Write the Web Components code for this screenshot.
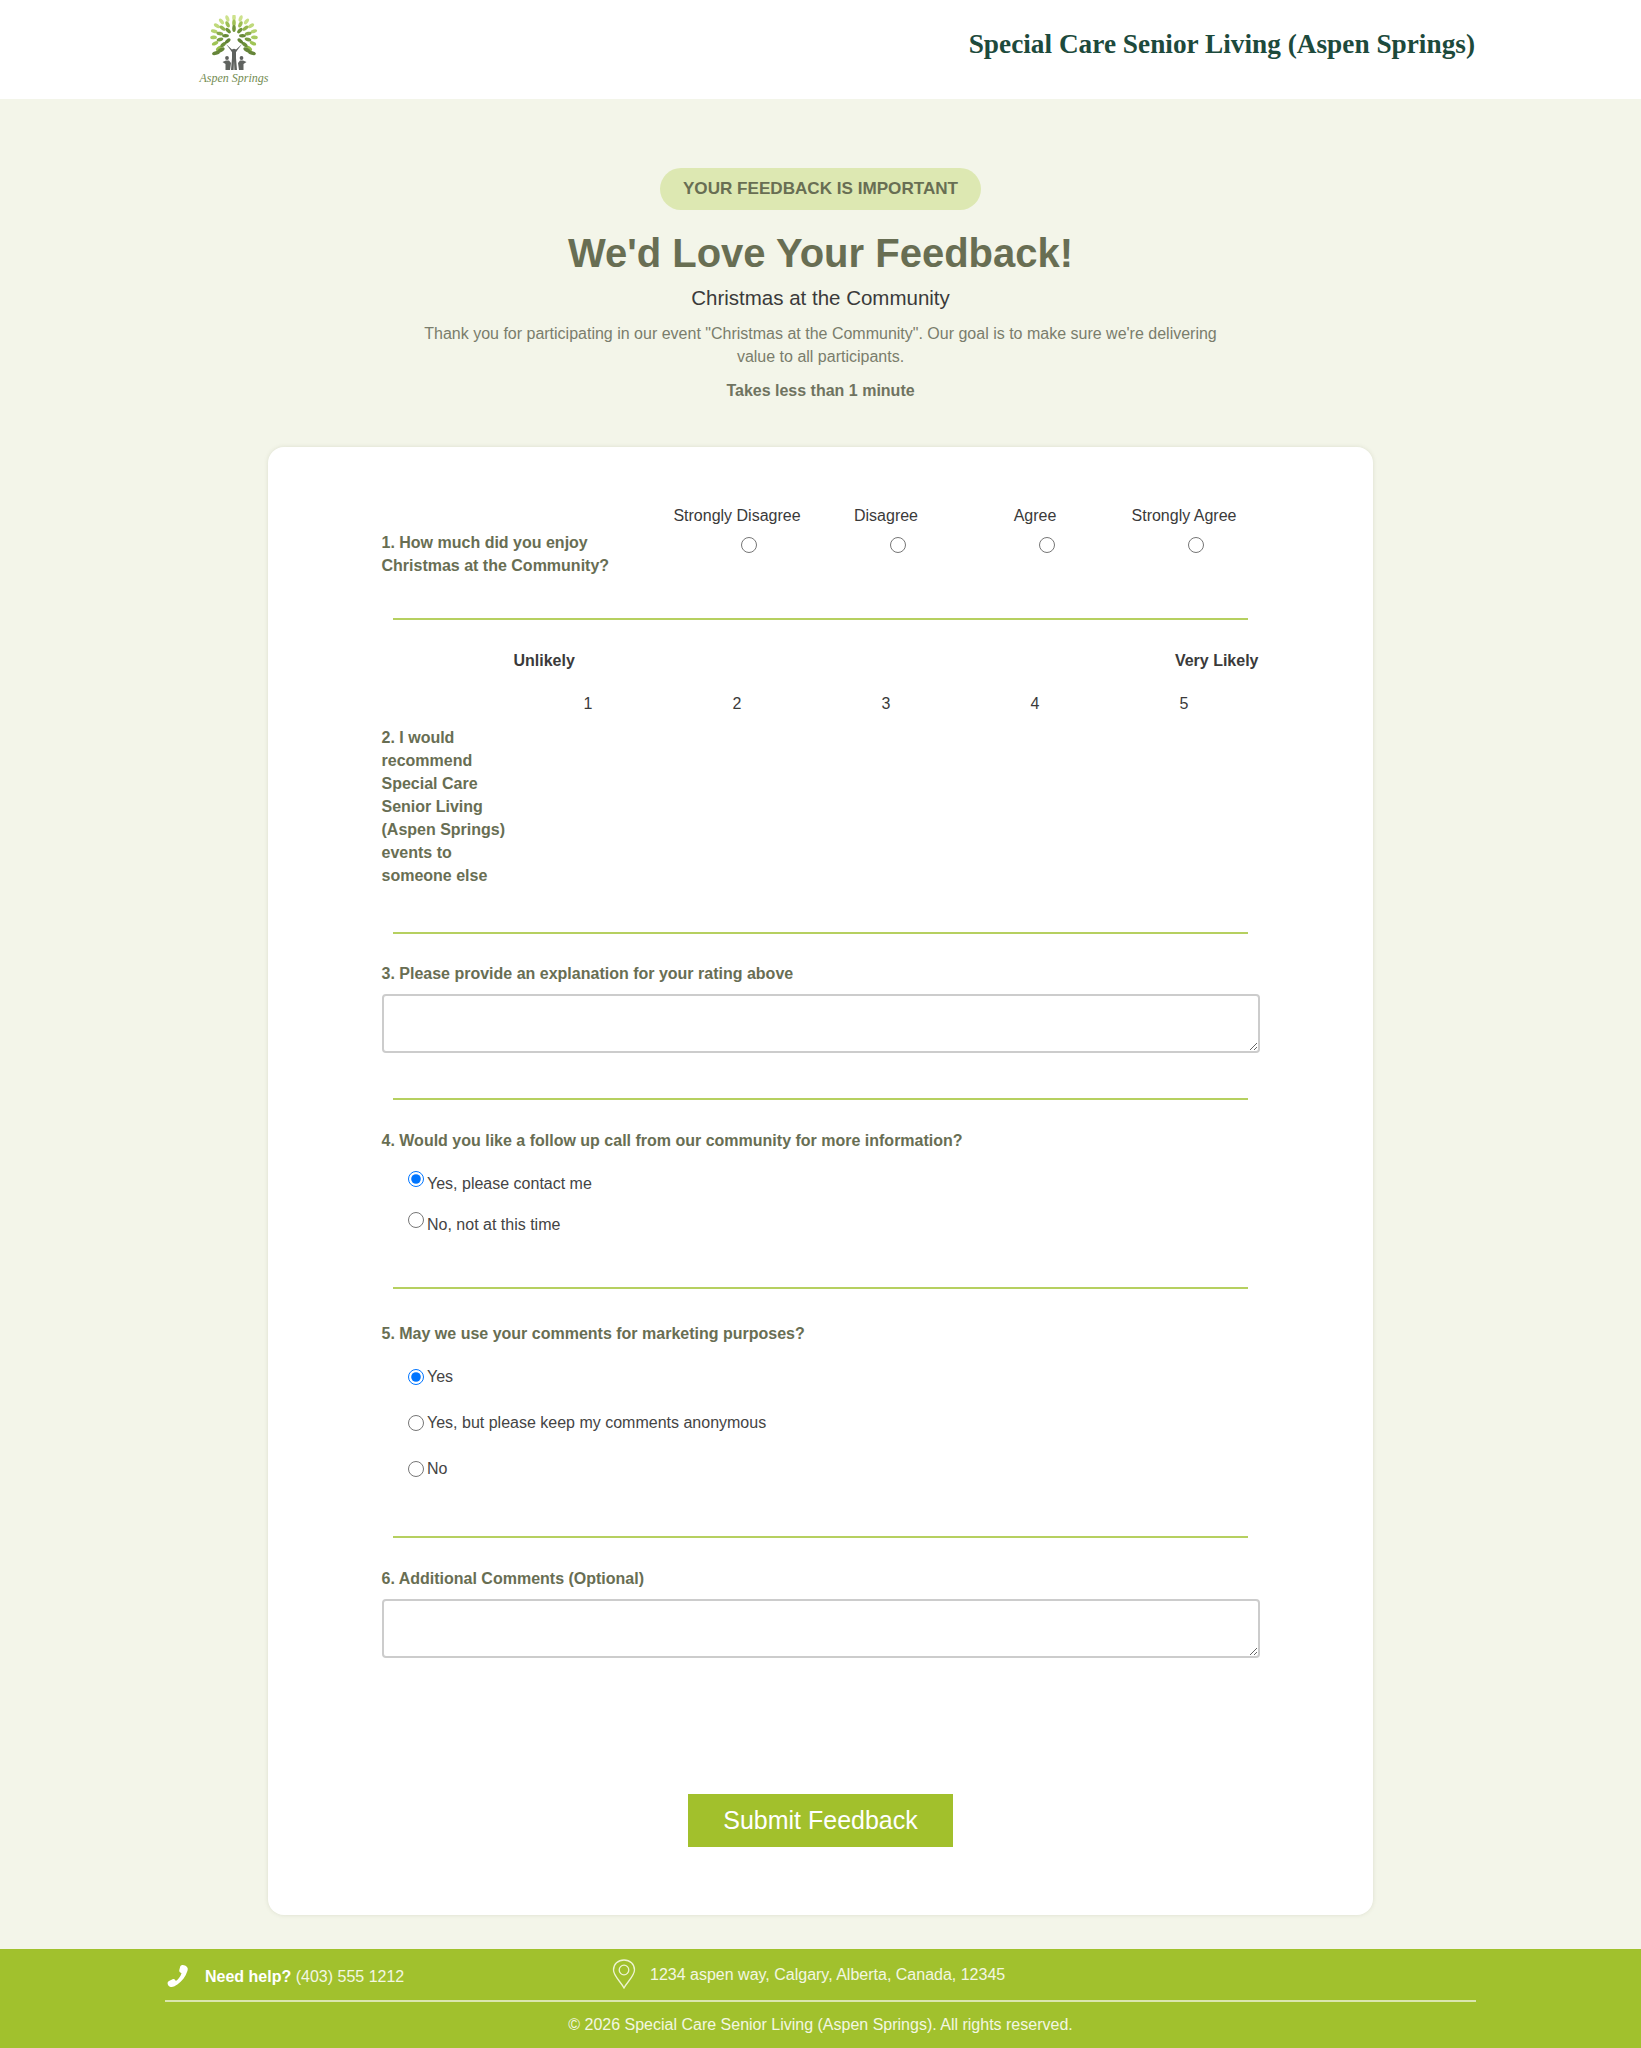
<!DOCTYPE html>
<html lang="en">
<head>
<meta charset="utf-8">
<title>Feedback</title>
<style>
    html, body { margin: 0; padding: 0; }
    body {
        background: #f3f5e9;
        font-family: "Liberation Sans", Arial, sans-serif;
        font-size: 16px;
        color: #333;
    }
</style>
</head>
<body>
<site-header title="Special Care Senior Living (Aspen Springs)"></site-header>
<page-intro></page-intro>
<feedback-card>
    <q-scale question="1. How much did you enjoy Christmas at the Community?" kind="agree"></q-scale>
    <q-rule gap="top1"></q-rule>
    <q-scale question="2. I would recommend Special Care Senior Living (Aspen Springs) events to someone else" kind="likely"></q-scale>
    <q-rule gap="top2"></q-rule>
    <q-text question="3. Please provide an explanation for your rating above"></q-text>
    <q-rule gap="top3"></q-rule>
    <q-choice question="4. Would you like a follow up call from our community for more information?" mode="tight" options="Yes, please contact me|No, not at this time" name="call"></q-choice>
    <q-rule gap="top4"></q-rule>
    <q-choice question="5. May we use your comments for marketing purposes?" mode="loose" options="Yes|Yes, but please keep my comments anonymous|No" name="marketing"></q-choice>
    <q-rule gap="top5"></q-rule>
    <q-text question="6. Additional Comments (Optional)"></q-text>
    <submit-button>Submit Feedback</submit-button>
</feedback-card>
<site-footer></site-footer>

<script>
'use strict';

function makeShadow(host, html) {
    const root = host.attachShadow({ mode: 'open' });
    root.innerHTML = html;
    return root;
}

function leaves() {
    // crown of the tree logo, rings of leaves, lighter on the outside and top
    const rings = [
        { rx: 20.5, ry: 18.5, n: 15, rgb: [205, 226, 140], low: [150, 190, 75] },
        { rx: 14.5, ry: 13, n: 11, rgb: [172, 205, 92], low: [100, 135, 55] },
        { rx: 8.5, ry: 7.5, n: 7, rgb: [125, 165, 62], low: [90, 120, 52] }
    ];
    let out = '';
    for (const ring of rings) {
        for (let i = 0; i < ring.n; i++) {
            const a = -222 + (264 * i) / (ring.n - 1);
            const rad = (a * Math.PI) / 180;
            const x = 40 + ring.rx * Math.cos(rad);
            const y = 21 + ring.ry * Math.sin(rad);
            const t = Math.max(0, Math.min(1, (y - 3) / 30));
            const c = ring.rgb.map((v, k) => Math.round(v + (ring.low[k] - v) * t));
            out += `<ellipse cx="${x.toFixed(1)}" cy="${y.toFixed(1)}" rx="1.8" ry="3.4" fill="rgb(${c.join(',')})" transform="rotate(${(a + 90).toFixed(0)} ${x.toFixed(1)} ${y.toFixed(1)})"/>`;
        }
    }
    // darker lower leaves beside the raised arms
    for (const [x, y, r] of [[27, 35, 60], [22, 38, 75], [53, 35, -60], [58, 38, -75]]) {
        out += `<ellipse cx="${x}" cy="${y}" rx="1.9" ry="4" fill="#66853a" transform="rotate(${r} ${x} ${y})"/>`;
    }
    return out;
}

class SiteHeader extends HTMLElement {
    connectedCallback() {
        makeShadow(this, `<style>
    :host { display: block; background: #fff; height: 99px; }
    .bar { display: flex; justify-content: space-between; padding: 0 166px 0 194px; }
    .logo { width: 80px; padding-top: 15px; display: flex; flex-direction: column; align-items: center; }
    svg { display: block; }
    .brand {
        font: italic 12px/14px "Liberation Serif", serif;
        color: #748c52;
        white-space: nowrap;
        margin-top: 1px;
    }
    h1 {
        margin: 27px 0 0;
        font: bold 27.3px/35px "Liberation Serif", serif;
        color: #1d4a3c;
    }
    </style>
    <div class="bar">
        <div class="logo">
            <svg width="80" height="55" viewBox="0 0 80 55">
                ${leaves()}
                <g fill="#5f625f">
                    <circle cx="40" cy="36" r="2.3"/>
                    <path d="M32 29 L38 37 L38 43 L37 55 L39.6 55 L40 46 L40.4 55 L43 55 L42 43 L42 37 L48 29 L41 35.5 L39 35.5 Z"/>
                    <circle cx="33" cy="43" r="1.9"/>
                    <path d="M28.5 47 L32 45.5 L35 45.5 L37 48 L36 55 L31.5 55 L31.5 49 Z"/>
                    <circle cx="47.5" cy="43" r="1.9"/>
                    <path d="M52.5 47 L49 45.5 L46 45.5 L44 48 L45 55 L49.5 55 L49.5 49 Z"/>
                </g>
            </svg>
            <div class="brand">Aspen Springs</div>
        </div>
        <h1>${this.getAttribute('title')}</h1>
    </div>`);
    }
}

class PageIntro extends HTMLElement {
    connectedCallback() {
        makeShadow(this, `<style>
    :host { display: block; text-align: center; padding-top: 68.5px; height: 348px; box-sizing: border-box; }
    .pill {
        display: inline-block;
        background: #dde8b2;
        color: #686e53;
        font-weight: bold;
        font-size: 17.1px;
        line-height: 20px;
        padding: 11px 23px;
        border-radius: 21px;
    }
    h2 { margin: 19.5px 0 0; font-size: 40px; line-height: 48px; color: #686e53; font-weight: bold; }
    .sub { margin-top: 7px; font-size: 20.5px; line-height: 28px; color: #3a3a3a; }
    p { margin: 10px auto 0; width: 800px; font-size: 16px; line-height: 23px; color: #7a7d6c; }
    .time { margin-top: 11px; font-weight: bold; color: #6f7360; font-size: 16px; line-height: 23px; }
    </style>
    <div class="pill">YOUR FEEDBACK IS IMPORTANT</div>
    <h2>We'd Love Your Feedback!</h2>
    <div class="sub">Christmas at the Community</div>
    <p>Thank you for participating in our event "Christmas at the Community". Our goal is to make sure we're delivering value to all participants.</p>
    <div class="time">Takes less than 1 minute</div>`);
    }
}

class FeedbackCard extends HTMLElement {
    connectedCallback() {
        makeShadow(this, `<style>
    :host {
        display: block;
        width: 1105px;
        box-sizing: border-box;
        margin: 0 auto 34px 268px;
        padding: 57px 113.5px 68px 113.5px;
        background: #fff;
        border-radius: 16px;
        box-shadow: 0 0 4px rgba(120, 130, 90, 0.18);
        height: 1468px;
    }
    </style><slot></slot>`);
    }
}

class QRule extends HTMLElement {
    connectedCallback() {
        const tops = { top1: 41, top2: 45, top3: 45, top4: 51, top5: 56 };
        const bottoms = { top1: 29, top2: 28, top3: 29, top4: 33, top5: 29 };
        const key = this.getAttribute('gap');
        makeShadow(this, `<style>
    :host { display: block; margin: ${tops[key]}px 12px ${bottoms[key]}px 11px; height: 2px; background: #b6d060; }
    </style>`);
    }
}

class QScale extends HTMLElement {
    connectedCallback() {
        const agree = this.getAttribute('kind') === 'agree';
        const q = this.getAttribute('question');
        const heads = agree
            ? ['Strongly Disagree', 'Disagree', 'Agree', 'Strongly Agree']
            : ['1', '2', '3', '4', '5'];
        makeShadow(this, `<style>
    :host { display: grid; font-size: 16px; line-height: 23px; color: #3a3a3a; }
    :host([kind="agree"]) { grid-template-columns: 281px repeat(4, 149px); }
    :host([kind="likely"]) { grid-template-columns: 132px repeat(5, 149px); }
    .head { text-align: center; white-space: nowrap; }
    .q { font-weight: bold; color: #686e53; }
    .ends { grid-column: 2 / -1; display: flex; justify-content: space-between; font-weight: bold; margin-bottom: 20px; }
    .cell { display: flex; justify-content: center; padding-left: 23px; }
    input { width: 16px; height: 16px; margin: 3px 0 0; accent-color: #0075ff; }
    </style>
    ${agree ? '' : '<div class="ends"><span>Unlikely</span><span>Very Likely</span></div>'}
    <div></div>
    ${heads.map((h) => `<div class="head">${h}</div>`).join('')}
    <div class="q" style="${agree ? 'margin-top:4px' : 'margin-top:11px;margin-right:-4px'}">${q}</div>
    ${agree ? heads.map(() => '<div class="cell" style="margin-top:7px"><input type="radio" name="q1"></div>').join('') : ''}`);
    }
}

class QText extends HTMLElement {
    connectedCallback() {
        makeShadow(this, `<style>
    :host { display: block; }
    .q { font-weight: bold; color: #686e53; font-size: 16px; line-height: 23px; }
    textarea {
        display: block;
        width: 100%;
        height: 59px;
        box-sizing: border-box;
        margin-top: 9px;
        border: 2px solid #ccc;
        border-radius: 4px;
        background: #fff;
        padding: 8px;
        font: 16px "Liberation Sans", sans-serif;
    }
    </style>
    <div class="q">${this.getAttribute('question')}</div>
    <textarea></textarea>`);
    }
}

class QChoice extends HTMLElement {
    connectedCallback() {
        const tight = this.getAttribute('mode') === 'tight';
        const name = this.getAttribute('name');
        const opts = this.getAttribute('options').split('|');
        const rows = opts.map((o, i) => `<label>
            <input type="radio" name="${name}"${i === 0 ? ' checked' : ''}><span>${o}</span>
        </label>`).join('');
        makeShadow(this, `<style>
    :host { display: block; font-size: 16px; line-height: 23px; color: #444; }
    .q { font-weight: bold; color: #686e53; }
    .rows { padding-left: 26.5px; margin-top: 20px; display: flex; flex-direction: column; gap: ${tight ? 18 : 23}px; }
    label { display: flex; align-items: ${tight ? 'flex-start' : 'center'}; }
    input { width: 16px; height: 16px; margin: ${tight ? '-1px' : '0'} 3px 0 0; accent-color: #0075ff; }
    </style>
    <div class="q">${this.getAttribute('question')}</div>
    <div class="rows">${rows}</div>`);
    }
}

class SubmitButton extends HTMLElement {
    connectedCallback() {
        makeShadow(this, `<style>
    :host { display: flex; justify-content: center; margin-top: 136px; }
    button {
        width: 265px;
        height: 53px;
        border: 0;
        background: #a2c02c;
        color: #fff;
        font: 25px "Liberation Sans", sans-serif;
        cursor: pointer;
    }
    </style><button><slot></slot></button>`);
    }
}

class SiteFooter extends HTMLElement {
    connectedCallback() {
        makeShadow(this, `<style>
    :host {
        display: block;
        background: #a1c12d;
        color: #fff;
        font-size: 16px;
        line-height: 23px;
        height: 99px;
        box-sizing: border-box;
        padding: 3px 165px 0;
    }
    .top { display: flex; align-items: center; height: 48px; border-bottom: 2px solid #dbe6ae; }
    .help { display: flex; align-items: center; width: 447px; }
    .help svg { margin: 0 16px 0 2px; }
    .addr { display: flex; align-items: center; margin-top: -4px; }
    .addr svg { margin-right: 14px; }
    .copy { text-align: center; margin-top: 11px; color: #f3f7e2; }
    </style>
    <div class="top">
        <div class="help">
            <svg width="22" height="24" viewBox="0 0 22 24"><path fill="#fff" d="M14.5 1.2 C15.6 .7 16.9 .9 18 1.4 C19.3 2 20.4 3 20.7 4.3 C20.9 5.4 20.6 6.5 20.2 7.6 C18.6 12.6 15 17.4 10.4 20.6 C8.3 22 5.4 23.6 3 22.8 C1.7 22.3 .7 20.9 .6 19.5 C.5 18.4 1 17.5 2 17 L5.6 15.2 C6.6 14.8 7.6 15.2 8.2 16 L8.9 16.9 C11.6 15.1 13.6 12.2 14.5 9.2 L13.3 8.5 C12.4 7.9 12.1 6.9 12.3 5.9 L13.2 2.6 C13.4 2 13.9 1.5 14.5 1.2 Z"/></svg>
            <span><b>Need help?</b> <span style="color:#f3f7e2">(403) 555 1212</span></span>
        </div>
        <div class="addr">
            <svg width="24" height="30" viewBox="0 0 24 30" fill="none" stroke="#eef4d4" stroke-width="1.3"><path d="M12 29 C9 23 1.5 17 1.5 11 C1.5 5 6 1 12 1 C18 1 22.5 5 22.5 11 C22.5 17 15 23 12 29 Z"/><circle cx="12" cy="11" r="4.8"/></svg>
            <span style="color:#f3f7e2">1234 aspen way, Calgary, Alberta, Canada, 12345</span>
        </div>
    </div>
    <div class="copy">© 2026 Special Care Senior Living (Aspen Springs). All rights reserved.</div>`);
    }
}

customElements.define('site-header', SiteHeader);
customElements.define('page-intro', PageIntro);
customElements.define('feedback-card', FeedbackCard);
customElements.define('q-rule', QRule);
customElements.define('q-scale', QScale);
customElements.define('q-text', QText);
customElements.define('q-choice', QChoice);
customElements.define('submit-button', SubmitButton);
customElements.define('site-footer', SiteFooter);
</script>
</body>
</html>
